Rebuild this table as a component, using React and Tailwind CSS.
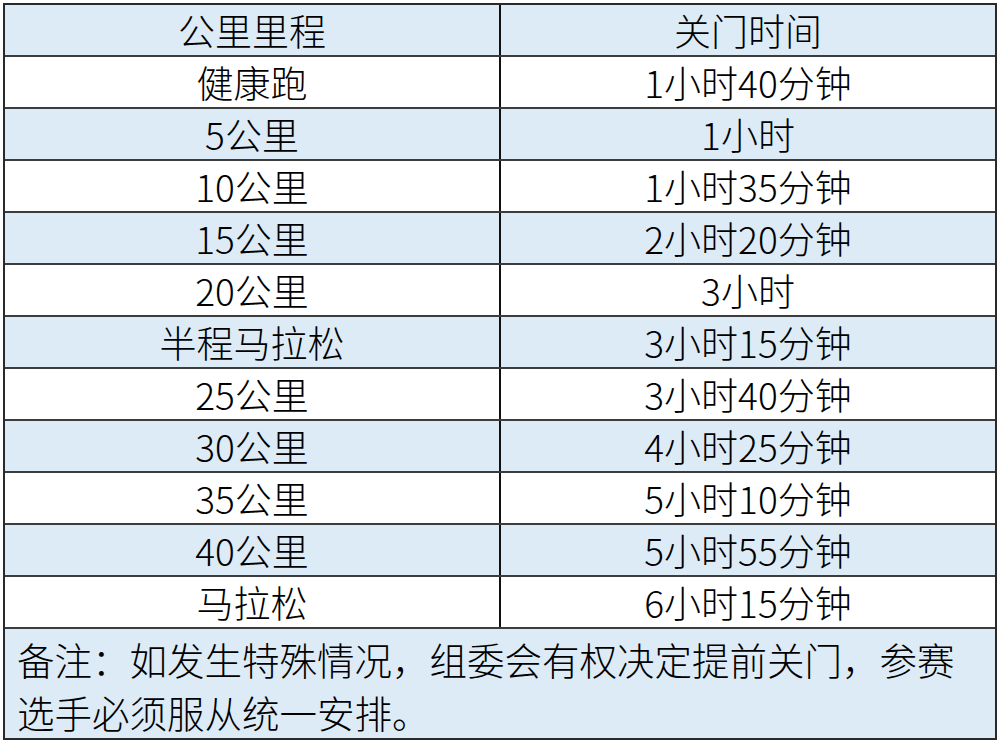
const rows = [
  ['健康跑', '1小时40分钟'],
  ['5公里', '1小时'],
  ['10公里', '1小时35分钟'],
  ['15公里', '2小时20分钟'],
  ['20公里', '3小时'],
  ['半程马拉松', '3小时15分钟'],
  ['25公里', '3小时40分钟'],
  ['30公里', '4小时25分钟'],
  ['35公里', '5小时10分钟'],
  ['40公里', '5小时55分钟'],
  ['马拉松', '6小时15分钟'],
];

const Row = ({ left, right, blue }) => (
  <div className={`flex h-[52px] border-b-2 border-[#3c3c3c] ${blue ? 'bg-[#ddebf7]' : 'bg-white'}`}>
    <div className="w-[496px] border-r-2 border-[#111] flex items-center justify-center">{left}</div>
    <div className="flex-1 flex items-center justify-center">{right}</div>
  </div>
);

export default function App() {
  return (
    <div className="w-[1000px] h-[744px] bg-white pt-[3px] pl-[3px]">
      <div
        className="w-[994px] border-2 border-[#2a2a2a] text-[37px] leading-none font-light text-black"
        style={{ fontFamily: '"Noto Sans CJK SC", "Noto Sans", sans-serif' }}
      >
        <div className="flex h-[52px] border-b-2 border-[#3c3c3c] bg-[#ddebf7]">
          <div className="w-[496px] border-r-2 border-[#111] flex items-center justify-center">公里里程</div>
          <div className="flex-1 flex items-center justify-center">关门时间</div>
        </div>
        {rows.map((r, i) => (
          <Row key={r[0]} left={r[0]} right={r[1]} blue={i % 2 === 1} />
        ))}
        <div className="h-[109px] bg-[#ddebf7] pl-[12px] pt-[3px] text-[37.5px] leading-[53px]">
          备注：如发生特殊情况，组委会有权决定提前关门，参赛
          <br />
          选手必须服从统一安排。
        </div>
      </div>
    </div>
  );
}
